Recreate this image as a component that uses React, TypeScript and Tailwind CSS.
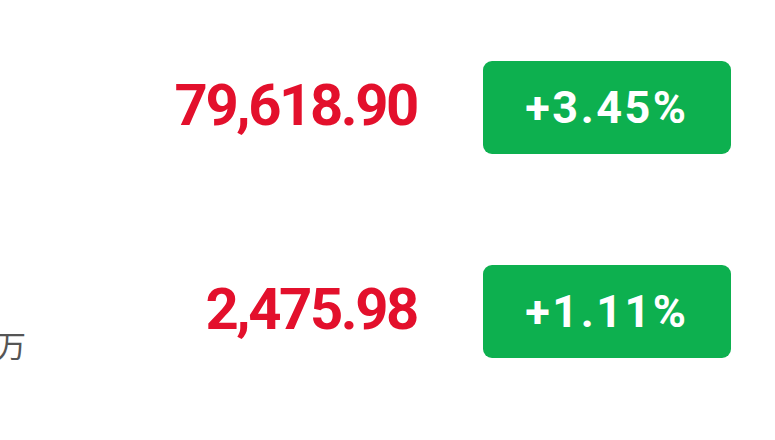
const rows = [
  { value: '79,618.90', change: '+3.45%', unit: '' },
  { value: '2,475.98', change: '+1.11%', unit: '万' },
];

export default function App() {
  return (
    <div
      className="relative w-[775px] h-[440px] overflow-hidden bg-white pt-[61px] flex flex-col gap-[111px]"
      style={{ fontFamily: 'Roboto, "Noto Sans CJK SC", sans-serif' }}
    >
      {rows.map((r) => (
        <div key={r.value} className="flex items-center h-[93px]">
          <div className="w-[417px] flex items-center">
            {r.unit && (
              <span className="ml-[-4px] mt-[70px] text-[30px] leading-none text-[#555]">{r.unit}</span>
            )}
            <span className="ml-auto mt-[-5px] text-[58px] leading-none font-bold text-[#e3102c] tracking-[-2.4px]">
              {r.value}
            </span>
          </div>
          <div className="ml-[66px] w-[248px] h-[93px] rounded-[9px] bg-[#0db04f] flex items-center justify-center">
            <span className="text-[45px] leading-none font-bold text-white tracking-[2.5px]">{r.change}</span>
          </div>
        </div>
      ))}
    </div>
  );
}
